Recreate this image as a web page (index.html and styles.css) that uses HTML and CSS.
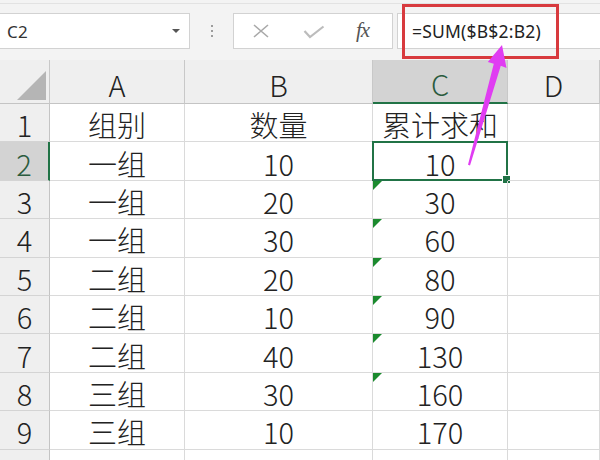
FILE: index.html
```html
<!DOCTYPE html>
<html lang="zh-CN">
<head>
<meta charset="utf-8">
<title>累计求和</title>
<link rel="stylesheet" href="styles.css">
</head>
<body>
<div class="app">
  <div class="toolbar">
    <div class="namebox"><span class="name">C2</span><span class="caret"></span></div>
    <div class="grip"><i></i><i></i><i></i></div>
    <div class="fxbox">
      <svg class="ico ico-x" width="18" height="16" viewBox="0 0 18 16"><path d="M2 2 L16 14 M16 2 L2 14" stroke="#a9a9a9" stroke-width="1.6" fill="none"/></svg>
      <svg class="ico ico-check" width="22" height="14" viewBox="0 0 22 14"><path d="M1.5 6 L7 12 L20.5 1.5" stroke="#bcbcbc" stroke-width="2.2" fill="none"/></svg>
      <span class="fx">fx</span>
    </div>
    <div class="formula">=SUM($B$2:B2)</div>
  </div>

  <div class="sheet">
    <div class="c h corner"><span class="tri"></span></div>
    <div class="c h">A</div>
    <div class="c h">B</div>
    <div class="c h sel-col">C</div>
    <div class="c h">D</div>

    <div class="c rh">1</div><div class="c">组别</div><div class="c">数量</div><div class="c">累计求和</div><div class="c"></div>
    <div class="c rh sel-row">2</div><div class="c">一组</div><div class="c">10</div><div class="c active">10</div><div class="c"></div>
    <div class="c rh">3</div><div class="c">一组</div><div class="c">20</div><div class="c warn">30</div><div class="c"></div>
    <div class="c rh">4</div><div class="c">一组</div><div class="c">30</div><div class="c warn">60</div><div class="c"></div>
    <div class="c rh">5</div><div class="c">二组</div><div class="c">20</div><div class="c warn">80</div><div class="c"></div>
    <div class="c rh">6</div><div class="c">二组</div><div class="c">10</div><div class="c warn">90</div><div class="c"></div>
    <div class="c rh">7</div><div class="c">二组</div><div class="c">40</div><div class="c warn">130</div><div class="c"></div>
    <div class="c rh">8</div><div class="c">三组</div><div class="c">30</div><div class="c warn">160</div><div class="c"></div>
    <div class="c rh">9</div><div class="c">三组</div><div class="c">10</div><div class="c">170</div><div class="c"></div>
    <div class="c rh last">10</div><div class="c"></div><div class="c"></div><div class="c"></div><div class="c"></div>
  </div>

  <div class="callout"></div>
  <svg class="arrow" width="600" height="460" viewBox="0 0 600 460">
    <polygon points="502,45 506.5,68 500.8,65.8 470,165.4 468,164.7 493.8,63.8 487.8,62" fill="#e03cf2"/>
  </svg>
</div>
</body>
</html>
```

FILE: styles.css
```css
* { box-sizing: border-box; }
html, body { margin: 0; padding: 0; }
body { width: 600px; height: 460px; overflow: hidden; background: #f3f3f3; }

.app {
  position: relative;
  width: 600px;
  height: 460px;
  overflow: hidden;
  font-family: "Noto Sans CJK SC", "Noto Sans", sans-serif;
}

/* ---------- toolbar ---------- */
.toolbar {
  height: 57px;
  margin-top: 3px;
  border-top: 1px solid #e2e2e2;
  padding-top: 9px;
  display: flex;
  align-items: flex-start;
  background: #f3f3f3;
}
.namebox {
  width: 190px;
  height: 36px;
  background: #fff;
  border: 1px solid #d2d2d2;
  border-left: none;
  display: flex;
  align-items: center;
  justify-content: space-between;
  padding: 0 9px 0 7px;
}
.name {
  font: 17px "Noto Sans", "Liberation Sans", sans-serif;
  color: #333;
  letter-spacing: 0.3px;
}
.caret {
  width: 0; height: 0;
  border-left: 4px solid transparent;
  border-right: 4px solid transparent;
  border-top: 4px solid #555;
}
.grip {
  width: 43px;
  height: 36px;
  display: flex;
  flex-direction: column;
  align-items: center;
  justify-content: center;
  gap: 3px;
}
.grip i {
  display: block;
  width: 2px;
  height: 2px;
  background: #9c9c9c;
}
.fxbox {
  width: 160px;
  height: 36px;
  background: #fff;
  border: 1px solid #d2d2d2;
  display: flex;
  align-items: center;
  padding-left: 18px;
}
.ico { display: block; }
.ico-x { margin-right: 33px; }
.ico-check { margin-right: 31px; margin-top: 2px; }
.fx {
  font: italic 21px "Liberation Serif", "DejaVu Serif", serif;
  color: #555;
  letter-spacing: -1px;
  margin-top: -2px;
}
.formula {
  margin-left: 4px;
  flex: 1;
  height: 36px;
  background: #fff;
  border: 1px solid #d2d2d2;
  border-right: none;
  display: flex;
  align-items: center;
  padding-left: 14px;
  font: 17.5px "Noto Sans", "Liberation Sans", sans-serif;
  color: #222;
  letter-spacing: 0.2px;
}

/* ---------- sheet ---------- */
.sheet {
  display: grid;
  grid-template-columns: 50px 135px 188px 135px 92px;
  grid-template-rows: 44px repeat(9, 38.4px) 40px;
  background: #fff;
}
.c {
  position: relative;
  border-right: 1px solid #dadada;
  border-bottom: 1px solid #dadada;
  display: flex;
  align-items: center;
  justify-content: center;
  padding-top: 3px;
  font-size: 29px;
  font-weight: 300;
  color: #222;
  white-space: nowrap;
}
.h {
  background: #efefef;
  border-right-color: #c8c8c8;
  border-bottom-color: #c4c4c4;
  font-size: 29px;
  padding-top: 4px;
}
.corner {
  justify-content: flex-end;
  align-items: flex-end;
  padding: 0 3px 3px 0;
}
.tri {
  width: 0; height: 0;
  border-left: 29px solid transparent;
  border-bottom: 29px solid #b5b5b5;
}
.rh {
  background: #efefef;
  border-right-color: #c4c4c4;
  border-bottom-color: #d4d4d4;
  font-size: 29px;
}
.last { align-items: flex-start; padding-top: 1px; }
.sel-col {
  background: #d3d3d3;
  border-bottom: 2px solid #217346;
  color: #2a5b3e;
}
.sel-row {
  background: #d3d3d3;
  border-right: 2px solid #217346;
  color: #2a5b3e;
}
.active::before {
  content: "";
  position: absolute;
  left: -1px; top: -1px; right: -1px; bottom: -1px;
  border: 2px solid #217346;
}
.active::after {
  content: "";
  position: absolute;
  right: -4px; bottom: -4px;
  width: 7px; height: 7px;
  background: #217346;
  border: 1px solid #fff;
}
.warn::before {
  content: "";
  position: absolute;
  left: 0; top: 0;
  width: 0; height: 0;
  border-top: 9px solid #1b8a2e;
  border-right: 9px solid transparent;
}

/* ---------- annotations ---------- */
.callout {
  position: absolute;
  left: 402px; top: 4px;
  width: 157px; height: 55px;
  border: 3px solid #d83a3e;
}
.arrow {
  position: absolute;
  left: 0; top: 0;
  pointer-events: none;
}
```
